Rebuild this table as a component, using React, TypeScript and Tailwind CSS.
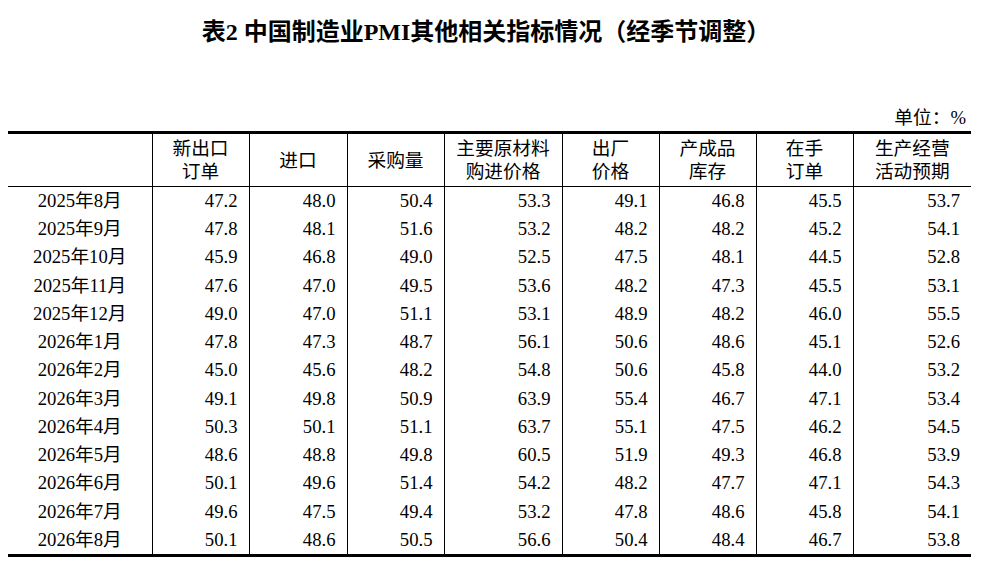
const headers: string[][] = [
  ['新出口', '订单'],
  ['进口'],
  ['采购量'],
  ['主要原材料', '购进价格'],
  ['出厂', '价格'],
  ['产成品', '库存'],
  ['在手', '订单'],
  ['生产经营', '活动预期'],
]

const rows: [string, string[]][] = [
  ['2025年8月', ['47.2', '48.0', '50.4', '53.3', '49.1', '46.8', '45.5', '53.7']],
  ['2025年9月', ['47.8', '48.1', '51.6', '53.2', '48.2', '48.2', '45.2', '54.1']],
  ['2025年10月', ['45.9', '46.8', '49.0', '52.5', '47.5', '48.1', '44.5', '52.8']],
  ['2025年11月', ['47.6', '47.0', '49.5', '53.6', '48.2', '47.3', '45.5', '53.1']],
  ['2025年12月', ['49.0', '47.0', '51.1', '53.1', '48.9', '48.2', '46.0', '55.5']],
  ['2026年1月', ['47.8', '47.3', '48.7', '56.1', '50.6', '48.6', '45.1', '52.6']],
  ['2026年2月', ['45.0', '45.6', '48.2', '54.8', '50.6', '45.8', '44.0', '53.2']],
  ['2026年3月', ['49.1', '49.8', '50.9', '63.9', '55.4', '46.7', '47.1', '53.4']],
  ['2026年4月', ['50.3', '50.1', '51.1', '63.7', '55.1', '47.5', '46.2', '54.5']],
  ['2026年5月', ['48.6', '48.8', '49.8', '60.5', '51.9', '49.3', '46.8', '53.9']],
  ['2026年6月', ['50.1', '49.6', '51.4', '54.2', '48.2', '47.7', '47.1', '54.3']],
  ['2026年7月', ['49.6', '47.5', '49.4', '53.2', '47.8', '48.6', '45.8', '54.1']],
  ['2026年8月', ['50.1', '48.6', '50.5', '56.6', '50.4', '48.4', '46.7', '53.8']],
]

export default function App() {
  return (
    <div className="w-[993px] h-[577px] bg-white text-black font-['Liberation_Serif','Noto_Sans_CJK_SC',serif]">
      <div className="ml-[8px] w-[963px]">
        <div className="h-[64px] pr-[7px] flex items-center justify-center text-[24px] font-bold">
          表2 中国制造业PMI其他相关指标情况（经季节调整）
        </div>
        <div className="mt-[40px] h-[27px] pr-[5px] text-right text-[18.7px] leading-[27px]">
          单位：%
        </div>
        <table className="w-[963px] table-fixed border-collapse border-t-[3px] border-b-[3px] border-black text-[18.7px]">
          <colgroup>
            <col className="w-[144px]" />
            <col className="w-[97px]" />
            <col className="w-[98px]" />
            <col className="w-[97px]" />
            <col className="w-[118px]" />
            <col className="w-[97px]" />
            <col className="w-[97px]" />
            <col className="w-[97px]" />
            <col className="w-[118px]" />
          </colgroup>
          <thead>
            <tr className="h-[54px] border-b border-black">
              <th className="p-0 border-r border-black" />
              {headers.map((h, i) => (
                <th
                  key={i}
                  className={`p-0 font-normal text-center leading-[23px] ${i < headers.length - 1 ? 'border-r border-black' : ''}`}
                >
                  {h.map((line) => (
                    <div key={line}>{line}</div>
                  ))}
                </th>
              ))}
            </tr>
          </thead>
          <tbody>
            {rows.map(([month, vals]) => (
              <tr key={month} className="h-[28.25px]">
                <td className="p-0 text-center leading-[28px] border-r border-black">{month}</td>
                {vals.map((v, i) => (
                  <td
                    key={i}
                    className={`p-0 pr-[11px] text-right leading-[28px] ${i < vals.length - 1 ? 'border-r border-black' : ''}`}
                  >
                    {v}
                  </td>
                ))}
              </tr>
            ))}
          </tbody>
        </table>
      </div>
    </div>
  )
}
